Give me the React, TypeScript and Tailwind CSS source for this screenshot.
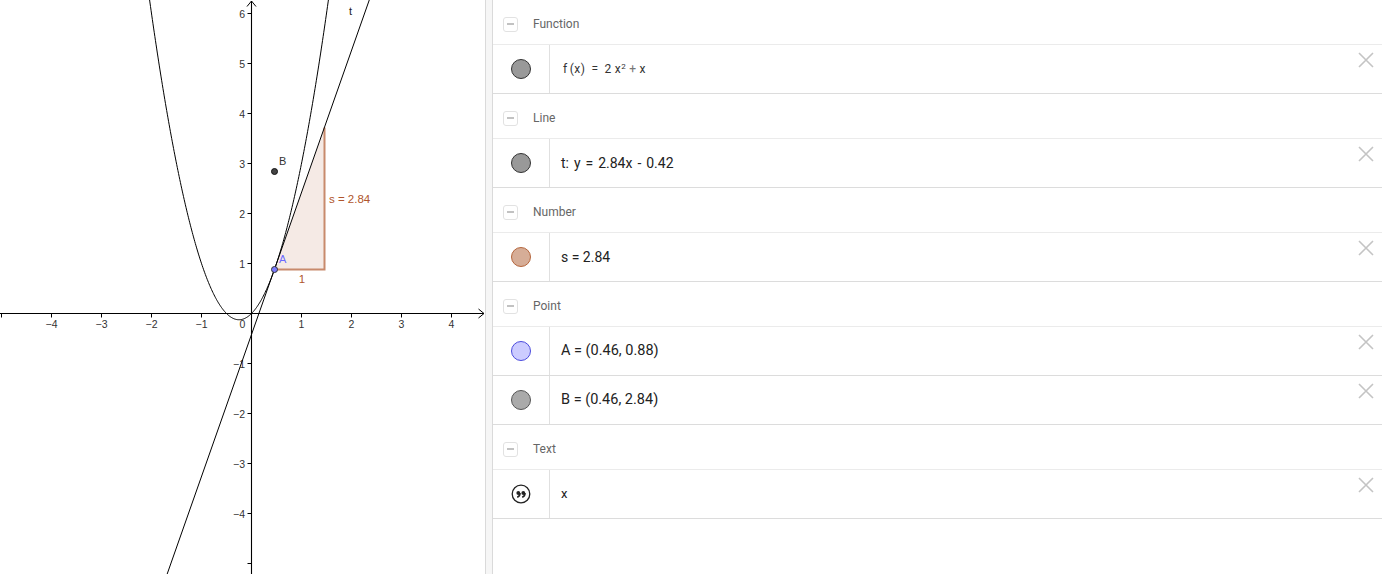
import React from "react";

const OX = 251.5;
const OY = 313.5;
const U = 50;
const X = (x: number) => OX + U * x;
const Y = (y: number) => OY - U * y;

function parabolaPath() {
  const pts: string[] = [];
  const n = 300;
  const x0 = -2.12;
  const x1 = 1.62;
  for (let i = 0; i <= n; i++) {
    const x = x0 + (i * (x1 - x0)) / n;
    const y = 2 * x * x + x;
    pts.push(`${i === 0 ? "M" : "L"}${X(x).toFixed(2)},${Y(y).toFixed(2)}`);
  }
  return pts.join(" ");
}

const lineT = (x: number) => 2.84 * x - 0.42;

function Graph() {
  const xs = [-5, -4, -3, -2, -1, 1, 2, 3, 4];
  const ys = [-5, -4, -3, -2, -1, 1, 2, 3, 4, 5, 6];
  const labelStyle = { fontFamily: '"Liberation Sans", Arial, sans-serif' };
  return (
    <svg width="485" height="574" className="block" style={labelStyle}>
      {/* slope triangle */}
      <polygon
        points={`${X(0.46)},${Y(0.88)} ${X(1.46)},${Y(0.88)} ${X(1.46)},${Y(3.72)}`}
        fill="rgba(153,51,0,0.1)"
        stroke="none"
      />
      <polyline
        points={`${X(0.46)},${Y(0.88)} ${X(1.46)},${Y(0.88)} ${X(1.46)},${Y(3.72)}`}
        fill="none"
        stroke="#c88a6c"
        strokeWidth="2"
      />
      {/* axes */}
      <line x1="0" y1={OY} x2="484" y2={OY} stroke="#000" strokeWidth="1.1" />
      <path d={`M478.5,${OY - 4.5} L484,${OY} L478.5,${OY + 4.5}`} fill="none" stroke="#000" strokeWidth="1" />
      <line x1={OX} y1="1" x2={OX} y2="574" stroke="#000" strokeWidth="1.1" />
      <path d={`M${OX - 4.5},6.5 L${OX},1 L${OX + 4.5},6.5`} fill="none" stroke="#000" strokeWidth="1" />
      {xs.map((i) => (
        <line key={"xt" + i} x1={X(i)} y1={OY} x2={X(i)} y2={OY + 4} stroke="#000" strokeWidth="1" />
      ))}
      {ys.map((i) => (
        <line key={"yt" + i} x1={OX - 4} y1={Y(i)} x2={OX} y2={Y(i)} stroke="#000" strokeWidth="1" />
      ))}
      {xs
        .filter((i) => i !== -5)
        .map((i) => (
          <text key={"xl" + i} x={X(i)} y={OY + 14} fontSize="10.5" fill="#333" textAnchor="middle">
            {i < 0 ? "\u2212" + Math.abs(i) : String(i)}
          </text>
        ))}
      <text x={OX - 9} y={OY + 14} fontSize="10.5" fill="#333" textAnchor="middle">
        0
      </text>
      {ys
        .filter((i) => i !== -5)
        .map((i) => (
          <text key={"yl" + i} x={OX - 6.5} y={Y(i) + 4} fontSize="10.5" fill="#333" textAnchor="end">
            {i < 0 ? "\u2212" + Math.abs(i) : String(i)}
          </text>
        ))}
      {/* parabola */}
      <path d={parabolaPath()} fill="none" stroke="#000" strokeWidth="1" />
      {/* line t */}
      <line x1={X(-1.75)} y1={Y(lineT(-1.75))} x2={X(2.45)} y2={Y(lineT(2.45))} stroke="#000" strokeWidth="1" />
      <text x="349" y="15" fontSize="11" fill="#222">
        t
      </text>
      {/* slope labels */}
      <text x="302" y="283" fontSize="11.5" fill="#b0552c" textAnchor="middle">
        1
      </text>
      <text x="329" y="203" fontSize="11.5" fill="#b0552c">
        s = 2.84
      </text>
      {/* points */}
      <circle cx={X(0.46)} cy={Y(2.84)} r="3" fill="#444" stroke="#111" strokeWidth="1" />
      <text x="279" y="165" fontSize="11" fill="#333">
        B
      </text>
      <circle cx={X(0.46)} cy={Y(0.88)} r="3" fill="#7b7bff" stroke="#333" strokeWidth="1" />
      <text x="279" y="263" fontSize="11" fill="#6b6bff">
        A
      </text>
    </svg>
  );
}

function CloseX() {
  return (
    <svg width="16" height="16" viewBox="0 0 16 16" className="absolute right-[8px] top-[7px]">
      <path d="M1 1 L15 15 M15 1 L1 15" stroke="#c4c4c4" strokeWidth="1.6" fill="none" />
    </svg>
  );
}

function Header({ title }: { title: string }) {
  return (
    <div className="flex h-[45px] items-center border-b border-[#ebebeb] pl-[10px] pt-[4px]">
      <div className="flex h-[15px] w-[15px] items-center justify-center rounded-[3px] border border-[#e2e2e2]">
        <div className="h-[1.5px] w-[7px] bg-[#c2c2c2]" />
      </div>
      <span className="ml-[15px] text-[12px] text-[#666]" style={{ fontFamily: "Roboto, sans-serif" }}>
        {title}
      </span>
    </div>
  );
}

function Dot({ fill, stroke }: { fill: string; stroke: string }) {
  return <div className="h-[20px] w-[20px] rounded-full border" style={{ background: fill, borderColor: stroke }} />;
}

function QuoteIcon() {
  return (
    <svg width="20" height="20" viewBox="0 0 20 20">
      <circle cx="10" cy="10" r="8.8" fill="none" stroke="#222" strokeWidth="1.3" />
      <circle cx="7.3" cy="9" r="1.9" fill="#222" />
      <path d="M9.1 9 Q9.1 12.3 6.2 13.2" stroke="#222" strokeWidth="1.5" fill="none" />
      <circle cx="12.3" cy="9" r="1.9" fill="#222" />
      <path d="M14.1 9 Q14.1 12.3 11.2 13.2" stroke="#222" strokeWidth="1.5" fill="none" />
    </svg>
  );
}

function Row({ icon, children }: { icon: React.ReactNode; children: React.ReactNode }) {
  return (
    <div className="relative flex h-[49px] border-b border-[#dcdcdc]">
      <div className="flex w-[57px] items-center justify-center border-r border-[#e0e0e0]">{icon}</div>
      <div
        className="flex flex-1 items-center pl-[11px] text-[14px] text-[#222]"
        style={{ fontFamily: "Roboto, sans-serif" }}
      >
        {children}
      </div>
      <CloseX />
    </div>
  );
}

export default function App() {
  return (
    <div className="flex h-[574px] w-[1382px] overflow-hidden bg-white">
      <div className="w-[485px] shrink-0">
        <Graph />
      </div>
      <div className="h-full w-[8px] shrink-0 border-x border-[#dadada] bg-[#f6f6f6]" />
      <div className="flex-1">
        <Header title="Function" />
        <Row icon={<Dot fill="#999999" stroke="#333" />}>
          <span className="pl-[2px] text-[12px] tracking-[0.5px] text-[#333]">
            f<span className="ml-[2px]">(x)</span>
            <span className="mx-[6px]">=</span>2<span className="ml-[3px]">x</span>
            <sup className="text-[8px]">2</sup>
            <span className="mx-[3px] text-[#777]">+</span>x
          </span>
        </Row>
        <Header title="Line" />
        <Row icon={<Dot fill="#999999" stroke="#333" />}>
          <span className="[word-spacing:1.5px]">t: y = 2.84x - 0.42</span>
        </Row>
        <Header title="Number" />
        <Row icon={<Dot fill="#d6ad97" stroke="#b5663d" />}>
          <span>s = 2.84</span>
        </Row>
        <Header title="Point" />
        <Row icon={<Dot fill="#ccccff" stroke="#4c4cdd" />}>
          <span className="text-[14.5px]">A = (0.46, 0.88)</span>
        </Row>
        <Row icon={<Dot fill="#aaaaaa" stroke="#555" />}>
          <span className="text-[14.5px]">B = (0.46, 2.84)</span>
        </Row>
        <Header title="Text" />
        <Row icon={<QuoteIcon />}>
          <span className="text-[13px]">x</span>
        </Row>
      </div>
    </div>
  );
}
